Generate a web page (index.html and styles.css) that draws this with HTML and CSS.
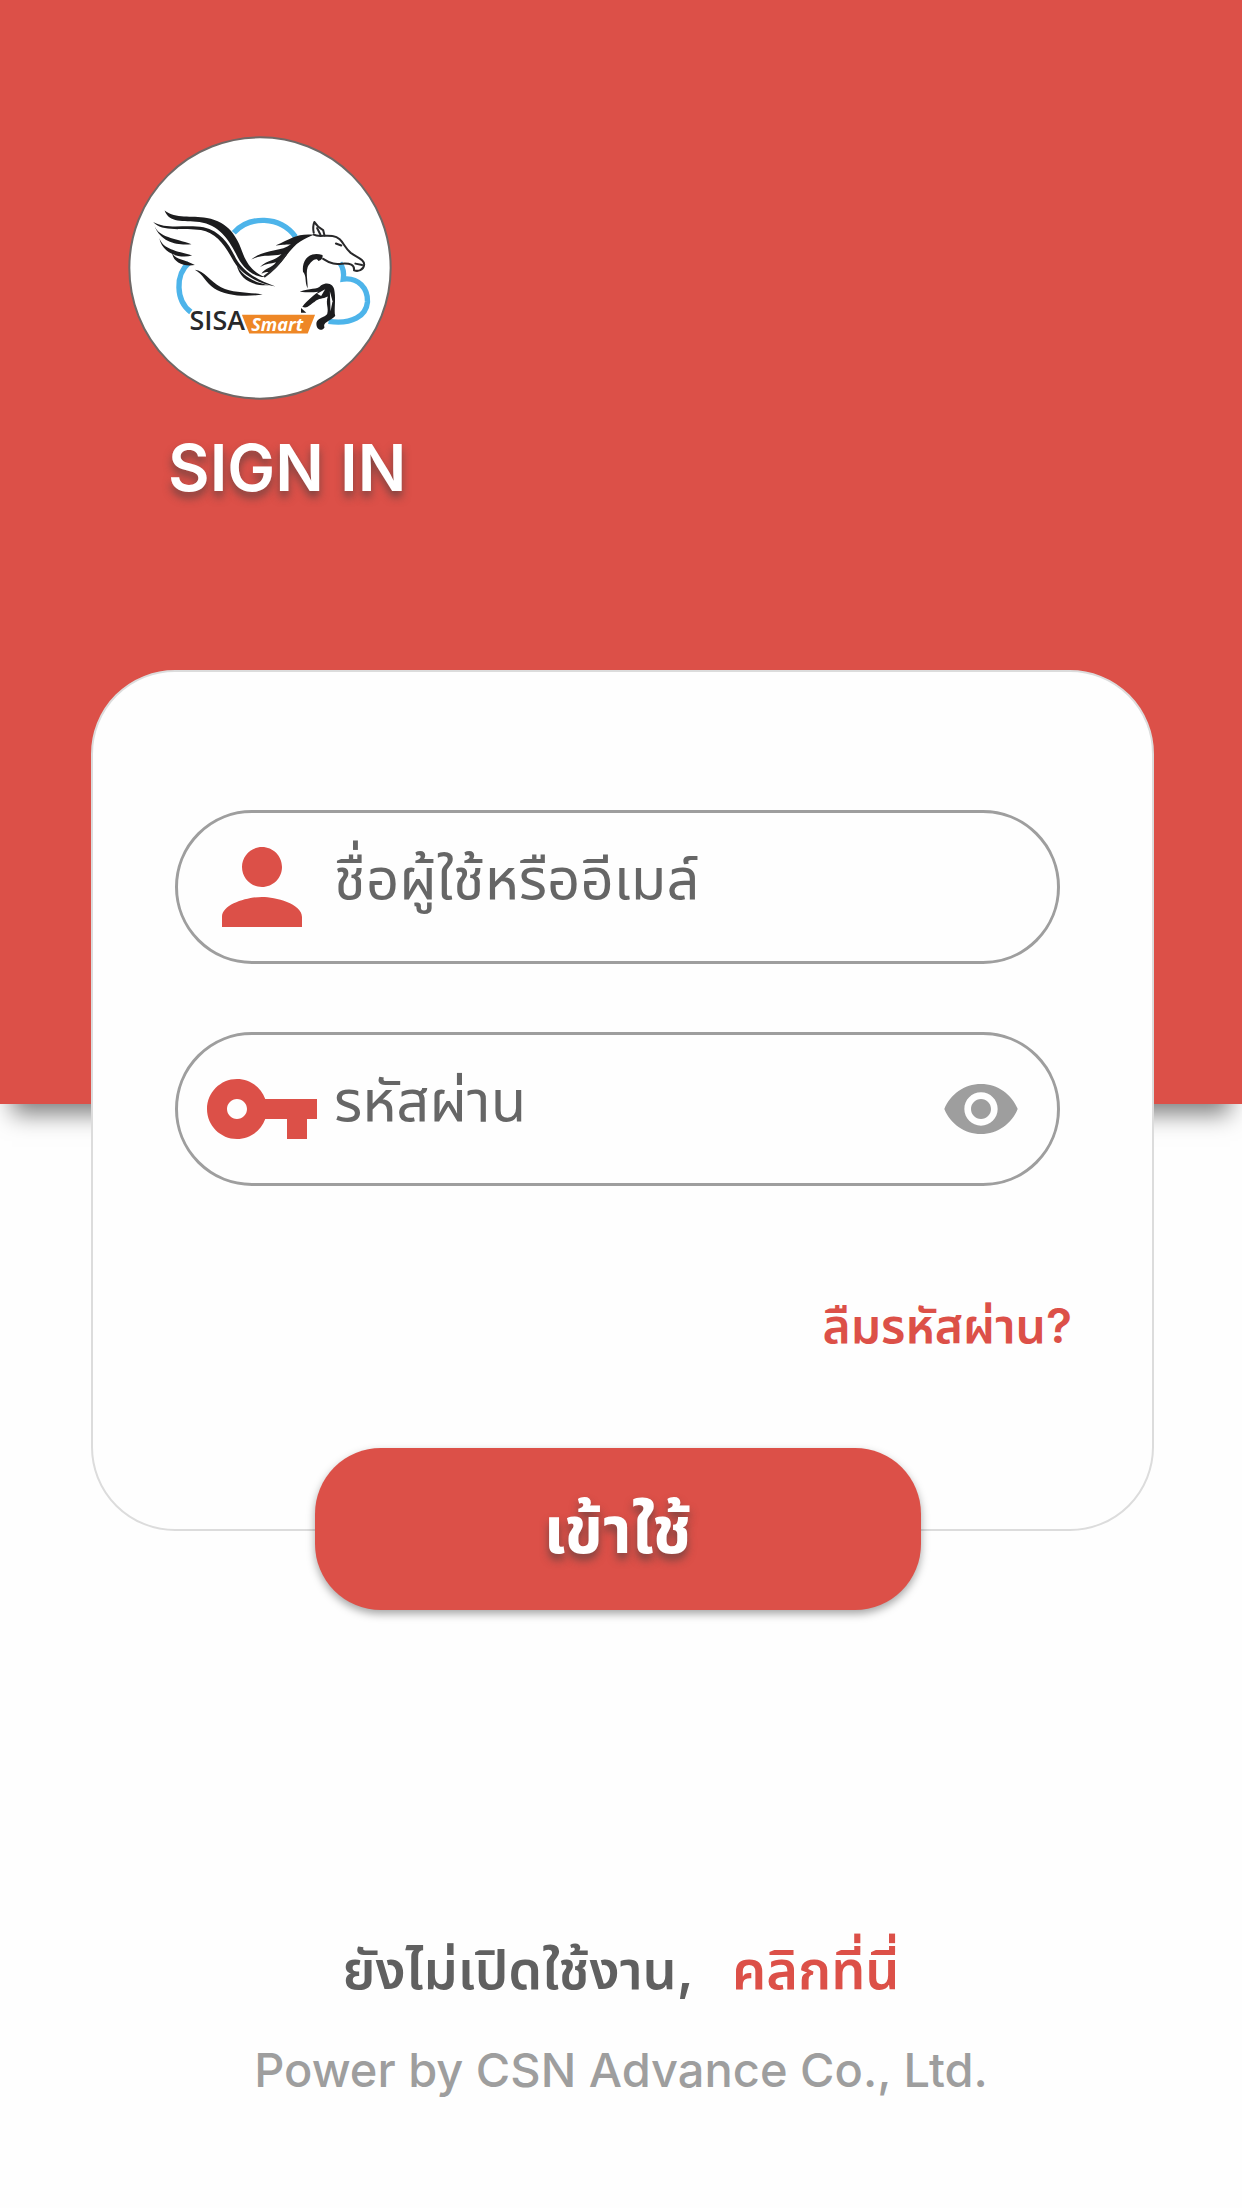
FILE: index.html
```html
<!DOCTYPE html>
<html lang="th">
<head>
<meta charset="utf-8">
<meta name="viewport" content="width=device-width, initial-scale=1">
<title>SISA Smart – Sign in</title>
<link rel="stylesheet" href="styles.css">
</head>
<body>
<main class="page">
  <header class="hero">
    <svg class="logo" viewBox="27 20 786 786" role="img" aria-label="SISA Smart">
      <circle cx="420" cy="413" r="389" fill="#fff" stroke="#706866" stroke-width="6"/>
      <!-- cloud outline -->
      <g fill="none" stroke="#4db4ea" stroke-width="16">
        <path d="M342 308C388 258 478 256 526 320"/>
        <path d="M208 398C168 432 168 510 214 544"/>
        <path d="M658 398Q672 418 668 446C712 440 742 474 740 514C736 556 694 582 624 572"/>
      </g>
      <!-- wing -->
      <g fill="#1c1c1e">
        <path d="M136 242C170 268 214 256 262 264C326 276 352 318 370 372C384 408 406 428 434 440C392 438 366 408 348 370C326 326 296 284 240 276C190 272 150 280 136 242Z"/>
        <path d="M102 276C144 300 200 282 252 292C304 304 328 344 348 384C368 420 404 446 466 468C410 458 366 432 342 394C316 346 290 308 244 300C196 292 128 308 102 276Z"/>
        <path d="M106 288C120 322 164 324 216 342C180 346 126 340 106 288Z"/>
        <path d="M120 324C132 358 170 362 218 376C182 386 130 372 120 324Z"/>
        <path d="M158 366C164 388 194 386 226 404C192 410 160 396 158 366Z"/>
        <path d="M226 418C254 420 270 452 304 470C340 488 384 484 428 492C376 500 318 496 284 474C256 454 252 432 226 418Z"/>
        <path d="M350 402C366 436 400 456 448 464C398 468 360 448 350 402Z"/>
        <!-- mane -->
        <path d="M580 314C530 310 516 324 466 346C490 342 500 344 512 342C482 366 430 356 394 388C430 370 454 380 484 372C462 394 444 386 420 410C442 398 450 402 468 396C454 414 436 412 424 430C444 422 446 426 452 426C486 400 512 350 540 334C554 326 566 320 580 314Z"/>
        <path d="M548 424C544 390 566 362 606 374C608 382 604 390 594 392C588 380 572 392 562 410C556 428 562 448 562 474C552 454 560 438 548 424Z"/>
        <!-- forelegs -->
        <path d="M538 484C570 470 588 480 602 464C622 454 640 460 642 484C646 512 640 540 644 556C626 574 606 574 612 590C604 604 586 596 588 576C592 560 612 562 620 550C626 532 614 520 622 498C606 506 596 502 582 514C568 522 560 536 546 528C562 510 574 498 594 484C574 486 562 486 538 484Z"/>
        <path d="M542 532L558 546L542 546Z"/>
      </g>
      <g fill="#fff">
        <path d="M590 490L614 476L602 496Z"/>
        <path d="M628 482L636 512L630 542Z"/>
      </g>
      <!-- horse head and neck -->
      <g fill="none" stroke="#28282a" stroke-width="6" stroke-linecap="round" stroke-linejoin="round">
        <path d="M580 314C594 322 614 314 636 318C666 322 668 350 690 368C710 382 732 388 730 404C728 420 712 424 700 420C702 404 688 398 664 400C646 402 632 402 608 386"/>
        <path d="M580 308Q576 290 582 276Q592 292 608 300L612 316"/>
        <path d="M590 294L600 314"/>
        <path d="M646 340L662 346"/>
        <path d="M704 400L724 404"/>
        <path d="M496 374Q470 412 434 438"/>
      </g>
      <text class="logo-name" x="210" y="599">SISA</text>
      <path d="M366 552H584L562 608H388Z" fill="#ee8726"/>
      <text class="logo-tag" x="394" y="600">Smart</text>
    </svg>
    <h1 class="title">SIGN IN</h1>
  </header>

  <form class="card">
    <label class="field">
      <svg class="field-icon" viewBox="0 0 24 24" aria-hidden="true"><path d="M12 12c2.210 0 4-1.790 4-4s-1.790-4-4-4-4 1.790-4 4 1.790 4 4 4zm0 2c-2.670 0-8 1.340-8 4v2h16v-2c0-2.660-5.330-4-8-4z"/></svg>
      <input class="field-input" type="text" name="username" aria-label="ชื่อผู้ใช้หรืออีเมล์" placeholder="ชื่อผู้ใช้หรืออีเมล์">
    </label>
    <div class="field">
      <svg class="field-icon" viewBox="0 0 24 24" aria-hidden="true"><path d="M12.650 10C11.830 7.670 9.610 6 7 6c-3.310 0-6 2.690-6 6s2.690 6 6 6c2.610 0 4.830-1.670 5.650-4H17v4h4v-4h2v-4H12.650zM7 14c-1.100 0-2-.9-2-2s.9-2 2-2 2 .9 2 2-.9 2-2 2z"/></svg>
      <input class="field-input" type="password" name="password" aria-label="รหัสผ่าน" placeholder="รหัสผ่าน">
      <button class="reveal" type="button" aria-label="แสดงรหัสผ่าน">
        <svg viewBox="0 0 24 24" aria-hidden="true"><path d="M12 4.500C7 4.500 2.730 7.610 1 12c1.730 4.390 6 7.500 11 7.500s9.270-3.110 11-7.500c-1.730-4.390-6-7.500-11-7.500zM12 17c-2.760 0-5-2.240-5-5s2.240-5 5-5 5 2.240 5 5-2.240 5-5 5zm0-8c-1.660 0-3 1.340-3 3s1.340 3 3 3 3-1.340 3-3-1.340-3-3-3z"/></svg>
      </button>
    </div>
    <a class="forgot" href="#forgot">ลืมรหัสผ่าน?</a>
    <button class="submit" type="submit">เข้าใช้</button>
  </form>

  <footer class="footer">
    <p class="activate"><span>ยังไม่เปิดใช้งาน,</span><a class="activate-link" href="#activate">คลิกที่นี่</a></p>
    <p class="credit">Power by CSN Advance Co., Ltd.</p>
  </footer>
</main>
</body>
</html>
```
FILE: styles.css
```css
:root {
  --red: #dc5048;
  --grey: #9e9e9e;
}

* {
  box-sizing: border-box;
}

body {
  margin: 0;
  background: #fefefe;
  font-family: "Inter", "Noto Sans Thai", "Noto Sans", sans-serif;
}

.page {
  display: flex;
  flex-direction: column;
  min-height: 100vh;
}

.hero {
  height: 1104px;
  padding: 136px 128px 0;
  background: var(--red);
  box-shadow: 0 22px 22px -12px rgba(0, 0, 0, 0.5);
}

.logo {
  display: block;
  width: 264px;
  height: 264px;
}

.logo-name {
  font: 600 80px "Open Sans", sans-serif;
  fill: #28282a;
}

.logo-tag {
  font: italic 700 54px "Open Sans", sans-serif;
  fill: #fff;
}

.title {
  margin: 28px 0 0 40px;
  color: #fff;
  font-size: 64px;
  line-height: 80px;
  font-weight: 600;
  text-shadow: 0 6px 8px rgba(60, 60, 60, 0.6);
}

.card {
  display: flex;
  flex-direction: column;
  margin: -434px 88px 0 91px;
  padding: 138px 92px 0 82px;
  background: #fefefe;
  border: 2px solid #dcdcdc;
  border-radius: 84px;
}

.field {
  display: flex;
  align-items: center;
  height: 154px;
  padding: 0 36px 0 24px;
  border: 3px solid var(--grey);
  border-radius: 78px;
}

.field + .field {
  margin-top: 68px;
}

.field-icon {
  flex: none;
  width: 120px;
  height: 120px;
  fill: var(--red);
}

.field-input {
  flex: 1;
  min-width: 0;
  height: 120px;
  padding: 0 0 18px 12px;
  border: 0;
  outline: 0;
  background: transparent;
  color: #666;
  font: inherit;
  font-size: 58px;
}

.field-input::placeholder {
  color: #666;
  opacity: 1;
}

.reveal {
  width: 80px;
  height: 80px;
  padding: 0;
  border: 0;
  background: none;
}

.reveal svg {
  display: block;
  width: 80px;
  height: 80px;
  fill: var(--grey);
}

.forgot {
  align-self: flex-end;
  margin: 110px -12px 0 0;
  color: var(--red);
  font-size: 48px;
  line-height: 60px;
  font-weight: 600;
  text-decoration: none;
}

.submit {
  align-self: center;
  width: 606px;
  max-width: 100%;
  height: 162px;
  margin: 92px 0 -81px;
  padding: 0;
  border: 0;
  border-radius: 66px;
  background: var(--red);
  box-shadow: 0 4px 8px rgba(0, 0, 0, 0.35);
  color: #fff;
  font: inherit;
  font-size: 66px;
  line-height: 80px;
  font-weight: 700;
  text-shadow: 0 6px 8px rgba(60, 60, 60, 0.6);
}

.footer {
  margin-top: auto;
  padding-bottom: 108px;
  text-align: center;
}

.activate,
.credit {
  margin: 0;
  line-height: 60px;
}

.activate {
  display: flex;
  justify-content: center;
  gap: 38px;
  color: #606060;
  font-size: 54px;
  font-weight: 600;
}

.activate-link {
  color: var(--red);
  text-decoration: none;
}

.credit {
  margin-top: 40px;
  color: var(--grey);
  font-size: 47px;
  font-weight: 500;
}
```
